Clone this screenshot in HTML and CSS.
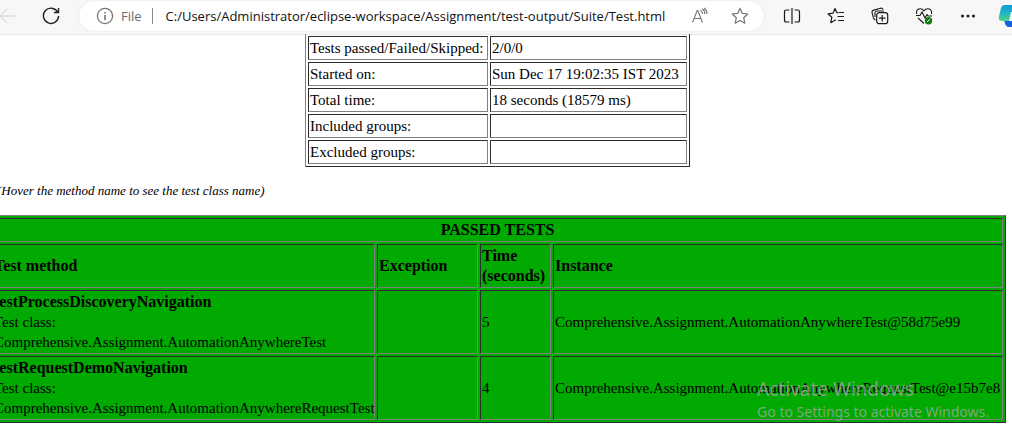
FILE: index.html
```html
<!DOCTYPE html>
<html lang="en">
<head>
<meta charset="utf-8">
<title>Test.html</title>
<link rel="stylesheet" href="styles.css">
</head>
<body>
<header class="toolbar">
  <nav class="nav">
    <button class="tool back" aria-label="Back"><svg width="18" height="16" viewBox="0 0 18 16"><path d="M17 8H2M9 1L2 8l7 7" stroke="#d0d0d0"/></svg></button>
    <button class="tool" aria-label="Refresh"><svg width="18" height="18" viewBox="0 0 18 18"><path d="M15.600 5A7.600 7.600 0 1 0 16.600 9M16.500 1v4.500H12" stroke="#222" stroke-width="1.400"/></svg></button>
  </nav>
  <div class="address">
    <svg width="18" height="18" viewBox="0 0 18 18"><circle cx="9" cy="9" r="7.600" stroke="#757575" stroke-width="1.300"/><path d="M9 8v5M9 5v1.400" stroke="#757575" stroke-width="1.600"/></svg>
    <label class="scheme" for="url">File</label>
    <span class="divider"></span>
    <input class="url" id="url" value="C:/Users/Administrator/eclipse-workspace/Assignment/test-output/Suite/Test.html">
    <button class="tool small" aria-label="Read aloud"><svg width="18" height="18" viewBox="0 0 18 18"><path d="M1.500 15.500L6.200 3.500h.6l4.700 12M3.200 11.500h6.600M9.500 3.200q2 1.200 2 3.800M11.300 1.800q2.600 1.600 2.600 5.200M13.200 1q2.800 2 2.800 6" stroke="#757575" stroke-width="1.100"/></svg></button>
    <button class="tool small" aria-label="Add to favorites"><svg width="18" height="18" viewBox="0 0 18 18"><path d="M9 1.400l2.300 5 5.400.6-4 3.700 1.100 5.500L9 13.500l-4.800 2.700 1.100-5.500-4-3.700 5.400-.6z" stroke="#757575" stroke-width="1.200" stroke-linejoin="round"/></svg></button>
  </div>
  <div class="actions">
    <button class="tool" aria-label="Split screen"><svg width="18" height="18" viewBox="0 0 18 18"><path d="M6.500 3H3.500q-2 0-2 2v8q0 2 2 2h3M11.500 3h3q2 0 2 2v8q0 2-2 2h-3M9 1v16" stroke="#1b1b1b" stroke-width="1.200"/></svg></button>
    <button class="tool" aria-label="Favorites"><svg width="18" height="18" viewBox="0 0 18 18"><path d="M11.500 5.800L9.800 5.600 8 1.500 6 6.200l-5 .6 3.800 3.500-1 5.400L8 13.200l.8-.5M12 5.500h5M10.500 9.500H17M11 13.500h6" stroke="#1b1b1b" stroke-width="1.200" stroke-linejoin="round"/></svg></button>
    <button class="tool" aria-label="Collections"><svg width="18" height="18" viewBox="0 0 18 18"><path d="M4.500 13Q3 12.500 2.500 11L1 5.500Q.8 3.600 2.500 3.100L9.500 1.200q2-.3 2.500 1.300M4 10V6q0-2 2-2h7" stroke="#1b1b1b" stroke-width="1.100"/><rect x="5.700" y="5.700" width="11" height="11" rx="2.500" stroke="#1b1b1b" stroke-width="1.200" fill="#f7f7f7"/><path d="M11.200 8v6.500M8 11.200h6.500" stroke="#1b1b1b" stroke-width="1.200"/></svg></button>
    <button class="tool" aria-label="Browser essentials"><svg width="18" height="18" viewBox="0 0 18 18"><path d="M1.600 7Q.8 2.200 4.800 1.800 7.500 1.600 9 4q1.500-2.400 4.200-2.200Q17.200 2.200 16.500 7M1 8.500h4L7 5l3 6 2-3.500 1 1.500h4M3 11l6 5.500" stroke="#1b1b1b" stroke-width="1.100"/><circle cx="13.500" cy="13.800" r="3.700" fill="#107c10"/><path d="M12 15l2.800-2.600" stroke="#fff" stroke-width="1"/></svg></button>
    <button class="tool" aria-label="More"><svg width="18" height="18" viewBox="0 0 18 18"><g fill="#1b1b1b"><circle cx="3.500" cy="9" r="1.500"/><circle cx="9" cy="9" r="1.500"/><circle cx="14.500" cy="9" r="1.500"/></g></svg></button>
    <button class="tool" aria-label="Copilot"><svg width="28" height="24" viewBox="0 0 28 24"><defs><linearGradient id="c" x1="0" y1="0" x2="0" y2="1"><stop offset="0" stop-color="#1399d6"/><stop offset=".5" stop-color="#20b5c8"/><stop offset="1" stop-color="#50d583"/></linearGradient></defs><path d="M6 16h12l-3 7h-4q-3 0-3.800-3z" fill="#1760dd"/><path d="M7 1h13l-6 13q-1 3-4 3H4q-4 0-3-5L3 4q1-3 4-3z" fill="url(#c)"/><path d="M13 8h12v9H11z" fill="#f7f7f7"/></svg></button>
  </div>
</header>
<main class="report">
  <table class="grid summary">
    <tr><td class="name">Tests passed/Failed/Skipped:</td><td class="value">2/0/0</td></tr>
    <tr><td>Started on:</td><td>Sun Dec 17 19:02:35 IST 2023</td></tr>
    <tr><td>Total time:</td><td>18 seconds (18579 ms)</td></tr>
    <tr><td>Included groups:</td><td></td></tr>
    <tr><td>Excluded groups:</td><td></td></tr>
  </table>
  <p class="hint">(Hover the method name to see the test class name)</p>
  <table class="grid passed">
    <colgroup><col class="c-method"><col class="c-exception"><col class="c-time"><col></colgroup>
    <tr><th class="title" colspan="4">PASSED TESTS</th></tr>
    <tr><th>Test method</th><th>Exception</th><th>Time<br>(seconds)</th><th>Instance</th></tr>
    <tr><td><b>testProcessDiscoveryNavigation</b><br>Test class:<br>Comprehensive.Assignment.AutomationAnywhereTest</td><td></td><td>5</td><td>Comprehensive.Assignment.AutomationAnywhereTest@58d75e99</td></tr>
    <tr><td><b>testRequestDemoNavigation</b><br>Test class:<br>Comprehensive.Assignment.AutomationAnywhereRequestTest</td><td></td><td>4</td><td>Comprehensive.Assignment.AutomationAnywhereRequestTest@e15b7e8</td></tr>
  </table>
</main>
<aside class="watermark">
  <div class="wm-title">Activate Windows</div>
  <div class="wm-text">Go to Settings to activate Windows.</div>
</aside>
</body>
</html>
```
FILE: styles.css
```css
* { box-sizing: border-box; }
body {
  margin: 0;
  overflow: hidden;
  background: #fff;
  color: #000;
  font: 16px/20px "Liberation Serif", "Times New Roman", serif;
}
svg { display: block; flex: none; fill: none; }
.toolbar {
  display: flex;
  height: 34px;
  padding: 1px 0 3px;
  background: #f7f7f7;
  box-shadow: 0 1px 0 #e9e9e9;
  font-family: "Open Sans", "Noto Sans", sans-serif;
}
.nav { display: flex; flex: none; width: 79px; }
.tool {
  display: flex;
  flex: none;
  align-items: center;
  justify-content: center;
  width: 44px;
  height: 30px;
  padding: 0;
  border: 0;
  background: none;
}
.back { width: 29px; padding-right: 16px; }
.small { width: 40px; }
.address {
  display: flex;
  flex: 1;
  align-items: center;
  min-width: 0;
  height: 30px;
  padding: 0 4px 0 17px;
  border-radius: 15px;
  background: #fff;
  box-shadow: 0 0 3px #e4e4e4;
  font-size: 13px;
}
.scheme { margin-left: 7px; color: #6b6b6b; }
.divider { flex: none; width: 1px; height: 16px; margin: 0 13px 0 10px; background: #8a8a8a; }
.url {
  flex: 1;
  min-width: 0;
  padding: 0;
  border: 0;
  outline: 0;
  background: none;
  color: #111;
  font: inherit;
}
.actions { display: flex; flex: none; width: 248px; padding-left: 6px; overflow: hidden; }
.report { margin: 0 6px 0 -11px; }
.grid {
  border: 1px solid;
  border-color: #808080 #2c2c2c #2c2c2c #808080;
  border-spacing: 2px;
}
.grid td, .grid th {
  height: 24px;
  padding: 1px;
  border: 1px solid;
  border-color: #2c2c2c #808080 #808080 #2c2c2c;
  text-align: left;
  white-space: nowrap;
}
.grid td { font-size: 15px; }
.grid b { font-size: 16px; }
.summary { margin: 0 auto; border-top: 0; }
.summary td { font-size: 15px; }
.name { width: 180px; }
.value { width: 197px; }
.hint { margin: 14px 0; padding-left: 8px; font-size: 13px; font-style: italic; }
.passed { width: 100%; table-layout: fixed; background: #0a0; }
.grid .title { text-align: center; }
.c-method { width: 383px; }
.c-exception { width: 101px; }
.c-time { width: 71px; }
.watermark {
  position: absolute;
  right: 23px;
  bottom: 5px;
  color: rgba(165, 165, 165, 0.8);
  font-family: "Noto Sans", "Open Sans", sans-serif;
  white-space: nowrap;
  pointer-events: none;
}
.wm-title { font-size: 19px; line-height: 26px; }
.wm-text { font-size: 14px; line-height: 20px; }
```
